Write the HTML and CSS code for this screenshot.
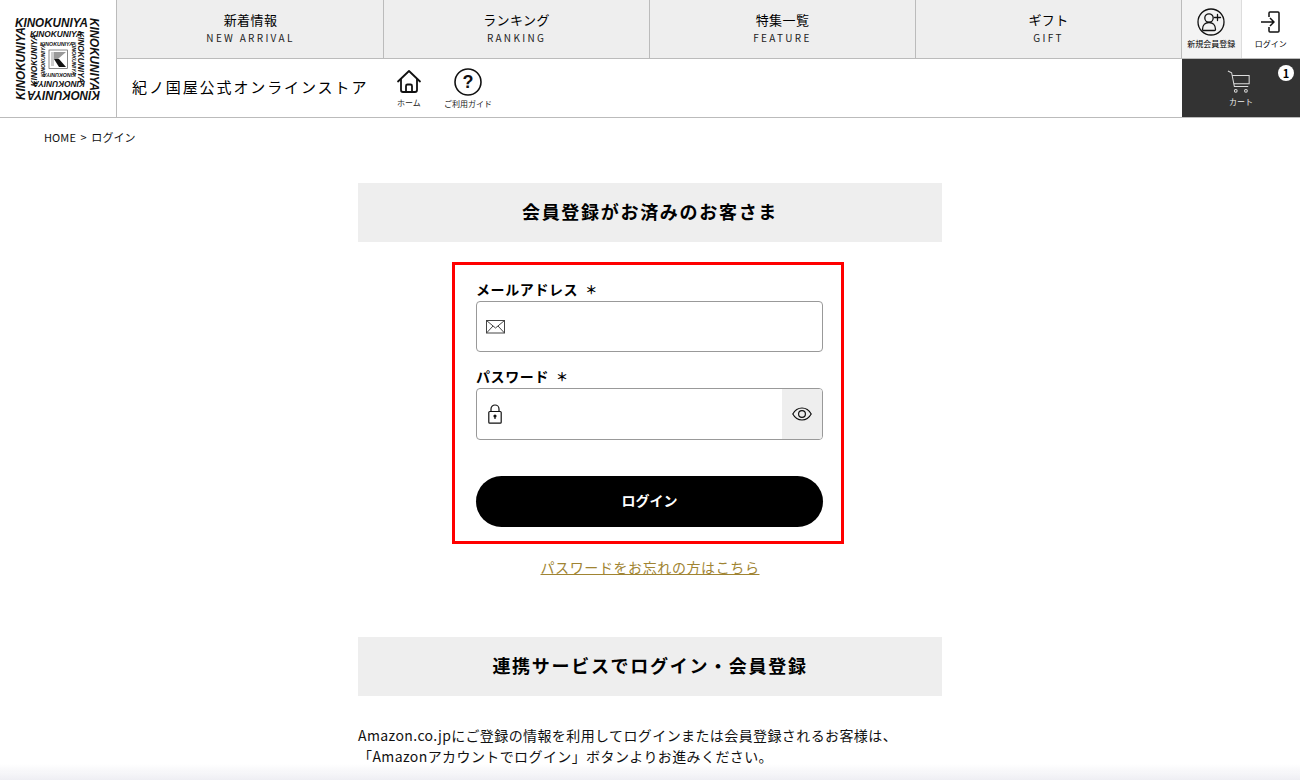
FILE: index.html
```html
<!DOCTYPE html>
<html lang="ja">
<head>
    <meta charset="utf-8">
    <title>ログイン</title>
    <link rel="stylesheet" href="styles.css">
</head>
<body>
    <header class="site-header">
        <a class="logo" href="#">
            <svg width="100" height="100" viewBox="-7 -8 100 100">
                <g class="logo-ring-1">
                    <text transform="translate(0 9.500)" textLength="73" lengthAdjust="spacingAndGlyphs">KINOKUNIYA</text>
                    <text transform="translate(75 1) rotate(90)" textLength="73" lengthAdjust="spacingAndGlyphs">KINOKUNIYA</text>
                    <text transform="translate(85 73.500) rotate(180)" textLength="73" lengthAdjust="spacingAndGlyphs">KINOKUNIYA</text>
                    <text transform="translate(10 83) rotate(-90)" textLength="73" lengthAdjust="spacingAndGlyphs">KINOKUNIYA</text>
                </g>
                <g class="logo-ring-2">
                    <text transform="translate(15 20)" textLength="52" lengthAdjust="spacingAndGlyphs">KINOKUNIYA</text>
                    <text transform="translate(63 14) rotate(90)" textLength="52" lengthAdjust="spacingAndGlyphs">KINOKUNIYA</text>
                    <text transform="translate(70 63.500) rotate(180)" textLength="52" lengthAdjust="spacingAndGlyphs">KINOKUNIYA</text>
                    <text transform="translate(22 69.500) rotate(-90)" textLength="52" lengthAdjust="spacingAndGlyphs">KINOKUNIYA</text>
                </g>
                <g class="logo-ring-3">
                    <text transform="translate(25 29)" textLength="33" lengthAdjust="spacingAndGlyphs">KINOKUNIYA</text>
                    <text transform="translate(57 25) rotate(90)" textLength="33" lengthAdjust="spacingAndGlyphs">KINOKUNIYA</text>
                    <text transform="translate(61 55.500) rotate(180)" textLength="33" lengthAdjust="spacingAndGlyphs">KINOKUNIYA</text>
                    <text transform="translate(29.500 60) rotate(-90)" textLength="33" lengthAdjust="spacingAndGlyphs">KINOKUNIYA</text>
                </g>
                <rect x="34" y="33" width="18.500" height="18.500" fill="#fff" stroke="#555" stroke-width=".7"/>
                <path d="M36 35h15l-8 7h-7z" fill="#999"/>
                <path d="M36 35h3v14h-3z" fill="#ccc"/>
                <path d="M39 42h5l7 8h-7z" fill="#111"/>
            </svg>
        </a>
        <div class="header-main">
            <nav class="global-nav">
                <a class="nav-item" href="#"><span class="nav-ja">新着情報</span><span class="nav-en">NEW ARRIVAL</span></a>
                <a class="nav-item" href="#"><span class="nav-ja">ランキング</span><span class="nav-en">RANKING</span></a>
                <a class="nav-item" href="#"><span class="nav-ja">特集一覧</span><span class="nav-en">FEATURE</span></a>
                <a class="nav-item" href="#"><span class="nav-ja">ギフト</span><span class="nav-en">GIFT</span></a>
            </nav>
            <div class="sub-header">
                <span class="store-name">紀ノ国屋公式オンラインストア</span>
                <a class="sub-link sub-link-home" href="#">
                    <svg width="26" height="26" viewBox="0 0 26 26" fill="none" stroke="#111" stroke-width="1.8" stroke-linejoin="round" stroke-linecap="round">
                        <path d="M2 12.500 13 2l11 10.500"/>
                        <path d="M5 10.500V21a2 2 0 0 0 2 2h12a2 2 0 0 0 2-2V10.500"/>
                        <path d="M10 23v-6a1.500 1.500 0 0 1 1.500-1.500h3A1.500 1.500 0 0 1 16 17v6"/>
                    </svg>
                    <span>ホーム</span>
                </a>
                <a class="sub-link sub-link-guide" href="#">
                    <svg width="28" height="28" viewBox="0 0 28 28">
                        <circle cx="14" cy="14" r="13" fill="none" stroke="#111" stroke-width="1.6"/>
                        <text x="14" y="20" class="guide-mark">?</text>
                    </svg>
                    <span>ご利用ガイド</span>
                </a>
            </div>
        </div>
        <div class="header-side">
            <div class="account-links">
                <a class="account-link account-link-new" href="#">
                    <svg width="28" height="28" viewBox="0 0 28 28" fill="none" stroke="#111" stroke-width="1.3" stroke-linecap="round">
                        <circle cx="14" cy="14" r="13"/>
                        <circle cx="12" cy="10" r="4.200"/>
                        <path d="M5.500 21.500c0-4.500 3-7 6.500-7s6.500 2.500 6.500 7a1 1 0 0 1-1 1h-11a1 1 0 0 1-1-1z"/>
                        <path d="M20.500 6.500v6M17.500 9.500h6"/>
                    </svg>
                    <span>新規会員登録</span>
                </a>
                <a class="account-link account-link-login" href="#">
                    <svg width="24" height="24" viewBox="0 0 24 24" fill="none" stroke="#111" stroke-width="1.5" stroke-linejoin="round">
                        <path d="M10 7V3a1 1 0 0 1 1-1h8a1 1 0 0 1 1 1v18a1 1 0 0 1-1 1h-8a1 1 0 0 1-1-1v-4"/>
                        <path d="M2 12h13M11 8l4 4-4 4"/>
                    </svg>
                    <span>ログイン</span>
                </a>
            </div>
            <a class="cart-link" href="#">
                <svg class="cart-icon" width="24" height="24" viewBox="0 0 26 26" fill="none" stroke="#ddd" stroke-width="1.1">
                    <path d="M1 1l4 2 3 15h15"/>
                    <path d="M5.500 6H24v9H7.500"/>
                    <circle cx="9.500" cy="22.500" r="1.500"/>
                    <circle cx="20.500" cy="22.500" r="1.500"/>
                </svg>
                <span>カート</span>
                <b class="cart-count">1</b>
            </a>
        </div>
    </header>

    <p class="breadcrumb">HOME &gt; ログイン</p>

    <main class="content">
        <h2 class="section-title">会員登録がお済みのお客さま</h2>
        <form class="login-box">
            <label class="field-label">メールアドレス<i class="required">＊</i></label>
            <div class="input-wrap input-wrap-mail">
                <svg width="20" height="14" viewBox="0 0 20 14" fill="none" stroke="#444" stroke-width="1">
                    <rect x=".5" y=".5" width="18" height="12.500"/>
                    <path d="M.5 .5 9.500 8l9-7.500M.5 13l6.500-7M18.500 13 12 6"/>
                </svg>
            </div>
            <label class="field-label field-label-pass">パスワード<i class="required">＊</i></label>
            <div class="input-wrap input-wrap-pass">
                <svg width="14" height="20" viewBox="0 0 14 20" fill="none" stroke="#111" stroke-width="1.2">
                    <rect x=".8" y="7.500" width="12.400" height="11.700" rx="1"/>
                    <path d="M3 7.500V5a4 4 0 0 1 8 0v2.500"/>
                    <circle cx="7" cy="12" r="1" fill="#111"/>
                    <path d="M7 12v3"/>
                </svg>
                <span class="eye-button">
                    <svg width="20" height="14" viewBox="0 0 20 14" fill="none" stroke="#111" stroke-width="1.2">
                        <path d="M.8 7C3 3 6.300 1 10 1s7 2 9.200 6c-2.200 4-5.500 6-9.200 6S3 11 .8 7z"/>
                        <circle cx="10" cy="7" r="3.400"/>
                    </svg>
                </span>
            </div>
            <button class="login-button" type="button">ログイン</button>
        </form>
        <a class="forgot-link" href="#">パスワードをお忘れの方はこちら</a>

        <h2 class="section-title section-title-second">連携サービスでログイン・会員登録</h2>
        <p class="amazon-text">Amazon.co.jpにご登録の情報を利用してログインまたは会員登録されるお客様は、<br>「Amazonアカウントでログイン」ボタンよりお進みください。</p>
    </main>
    <div class="bottom-fade"></div>
</body>
</html>
```

FILE: styles.css
```css
html, body {
    height: 100%;
    overflow: hidden;
}

body {
    margin: 0;
    font-family: "Noto Sans CJK JP", "Noto Sans", sans-serif;
    color: #000;
    background: #fff;
}

a {
    color: inherit;
    text-decoration: none;
}

.site-header {
    display: flex;
    height: 118px;
    box-sizing: border-box;
    border-bottom: 1px solid #bbb;
}

.logo {
    width: 116px;
    flex: none;
    display: flex;
    align-items: center;
    justify-content: center;
    border-right: 1px solid #bbb;
}

.logo svg text {
    font-family: "Liberation Sans", sans-serif;
    font-weight: bold;
    font-style: italic;
    fill: #111;
}

.logo-ring-1 { font-size: 13px; }
.logo-ring-2 { font-size: 9.500px; }
.logo-ring-3 { font-size: 6px; }

.header-main {
    flex: 1;
    display: flex;
    flex-direction: column;
    min-width: 0;
}

.global-nav {
    display: flex;
    height: 59px;
    padding-left: 1px;
    background: #eee;
    border-bottom: 1px solid #bbb;
    box-sizing: border-box;
}

.nav-item {
    flex: 1;
    display: flex;
    flex-direction: column;
    align-items: center;
    padding-top: 11px;
    border-right: 1px solid #bbb;
}

.nav-ja {
    font-size: 13px;
    line-height: 18px;
    letter-spacing: .4px;
}

.nav-en {
    font-size: 10px;
    line-height: 14px;
    margin-top: 2px;
    letter-spacing: 2.300px;
    color: #222;
}

.sub-header {
    flex: 1;
    display: flex;
    align-items: center;
    padding-left: 15px;
}

.store-name {
    font-size: 15px;
    letter-spacing: 1.900px;
    width: 251px;
    margin-bottom: 4px;
}

.sub-link {
    display: flex;
    flex-direction: column;
    align-items: center;
    font-size: 8px;
    line-height: 10px;
    gap: 3px;
    color: #222;
}

.sub-link-home {
    margin-left: 13px;
    width: 26px;
}

.sub-link-guide {
    margin-left: 22px;
    width: 48px;
}

.guide-mark {
    font-family: "Liberation Sans", sans-serif;
    font-size: 18px;
    font-weight: bold;
    text-anchor: middle;
    fill: #111;
}

.header-side {
    width: 118px;
    flex: none;
    display: flex;
    flex-direction: column;
}

.account-links {
    display: flex;
    height: 59px;
    border-bottom: 1px solid #bbb;
    box-sizing: border-box;
}

.account-link {
    flex: 1;
    display: flex;
    flex-direction: column;
    align-items: center;
    justify-content: flex-start;
    font-size: 8px;
    line-height: 12px;
    white-space: nowrap;
}

.account-link-new {
    background: #f3f3f3;
    border-right: 1px solid #ddd;
    padding-top: 8px;
    gap: 2px;
}

.account-link-login {
    padding-top: 10px;
    gap: 4px;
}

.cart-link {
    flex: 1;
    position: relative;
    display: flex;
    flex-direction: column;
    align-items: center;
    padding-top: 11px;
    gap: 2px;
    background: #333;
    color: #eee;
    font-size: 8px;
    line-height: 12px;
}

.cart-icon {
    margin-right: 4px;
}

.cart-count {
    position: absolute;
    top: 6px;
    right: 6px;
    width: 16px;
    height: 16px;
    border-radius: 50%;
    background: #fff;
    color: #000;
    font-size: 11px;
    line-height: 16px;
    text-align: center;
}

.breadcrumb {
    margin: 0;
    padding: 11px 0 0 44px;
    font-size: 11px;
    line-height: 16px;
    letter-spacing: .1px;
    word-spacing: 2px;
    color: #111;
}

.content {
    width: 584px;
    margin: 38px auto 0;
    display: flex;
    flex-direction: column;
}

.section-title {
    margin: 0;
    height: 59px;
    background: #eee;
    font-size: 18px;
    font-weight: bold;
    line-height: 57px;
    text-align: center;
    letter-spacing: 1.700px;
}

.login-box {
    width: 392px;
    height: 282px;
    box-sizing: border-box;
    margin: 20px 0 0 94px;
    padding: 14px 18px 0 21px;
    border: 3px solid #f00;
    display: flex;
    flex-direction: column;
}

.field-label {
    height: 20px;
    font-size: 14px;
    font-weight: bold;
    line-height: 20px;
    letter-spacing: .6px;
    margin-bottom: 2px;
}

.field-label-pass {
    margin: 14px 0 2px;
}

.required {
    font-style: normal;
    font-size: 12px;
    margin-left: 7px;
}

.input-wrap {
    height: 51px;
    box-sizing: border-box;
    border: 1px solid #999;
    border-radius: 4px;
    display: flex;
    align-items: center;
    padding-left: 9px;
    overflow: hidden;
}

.input-wrap-pass {
    height: 52px;
    padding-left: 11px;
    justify-content: space-between;
}

.eye-button {
    width: 40px;
    height: 100%;
    background: #eee;
    display: flex;
    align-items: center;
    justify-content: center;
}

.login-button {
    margin-top: 36px;
    height: 51px;
    padding: 0 0 4px;
    border: 0;
    border-radius: 26px;
    background: #000;
    color: #fff;
    font: bold 14px "Noto Sans CJK JP", sans-serif;
}

.forgot-link {
    align-self: center;
    margin-top: 13px;
    font-size: 14px;
    line-height: 20px;
    letter-spacing: .6px;
    color: #a08432;
    text-decoration: underline;
}

.section-title-second {
    margin-top: 60px;
}

.amazon-text {
    margin: 29px 0 0;
    font-size: 14px;
    line-height: 21px;
    letter-spacing: .4px;
    color: #111;
}

.bottom-fade {
    position: fixed;
    left: 0;
    right: 0;
    bottom: 0;
    height: 16px;
    background: linear-gradient(rgba(238, 238, 243, 0), #eeeef3);
}
```
